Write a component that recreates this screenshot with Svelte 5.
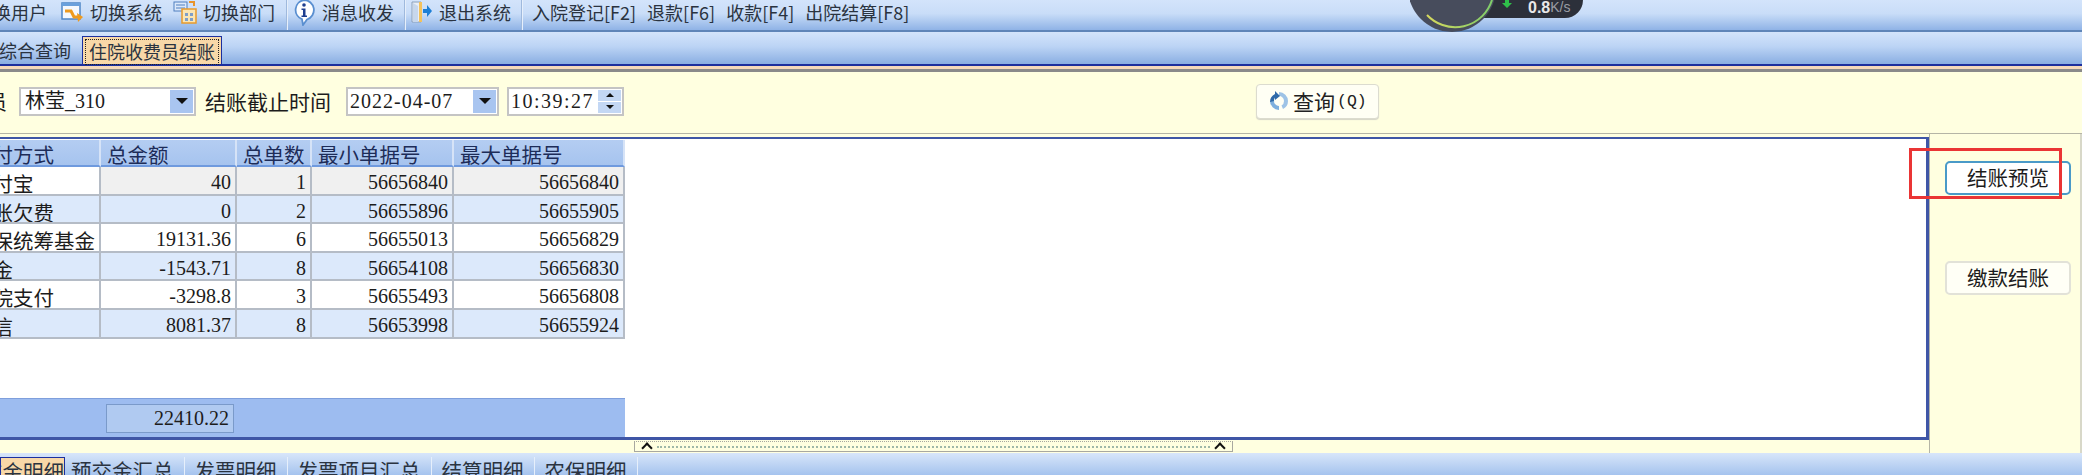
<script>
  // settlement summary by payment type
  const rows = [
    { name: '支付宝', total: '40', count: 1, min: '56656840', max: '56656840' },
    { name: '挂账欠费', total: '0', count: 2, min: '56655896', max: '56655905' },
    { name: '医保统筹基金', total: '19131.36', count: 6, min: '56655013', max: '56656829' },
    { name: '现金', total: '-1543.71', count: 8, min: '56654108', max: '56656830' },
    { name: '医院支付', total: '-3298.8', count: 3, min: '56655493', max: '56656808' },
    { name: '微信', total: '8081.37', count: 8, min: '56653998', max: '56655924' }
  ];
  const columns = ['支付方式', '总金额', '总单数', '最小单据号', '最大单据号'];
  const bottomTabs = ['预交金汇总', '发票明细', '发票项目汇总', '结算明细', '农保明细'];
</script>

<div class="app">
  <div class="toolbar">
    <span class="tool first">切换用户</span>
    <span class="tool">
      <svg class="ico" width="23" height="23" viewBox="0 0 23 23">
        <rect x="1" y="2" width="18" height="16" fill="#f4f8fe" stroke="#4f86c6" stroke-width="1.5" />
        <rect x="1" y="2" width="18" height="3" fill="#6aa0dc" />
        <path d="M4 10h6l3 6h5" fill="none" stroke="#ee9a1e" stroke-width="3" />
        <path d="M16 12l6 4-5 5z" fill="#ee9a1e" />
      </svg>
      切换系统
    </span>
    <span class="tool">
      <svg class="ico" width="24" height="24" viewBox="0 0 24 24">
        <rect x="1" y="2" width="13" height="9" fill="#dbe8fa" stroke="#4f7fbf" />
        <path d="M3 5h9M3 8h9" stroke="#4f7fbf" />
        <rect x="9" y="9" width="14" height="14" fill="#fbe6b4" stroke="#e89a2c" stroke-width="1.5" />
        <path d="M12 13h3v3h-3zM17 13h3v3h-3zM12 18h3v3h-3zM17 18h3v3h-3z" fill="#7f9fc8" />
        <path d="M16 1h6v5h-2V3h-4z" fill="#e8942c" />
      </svg>
      切换部门
    </span>
    <i class="sep"></i>
    <span class="tool wide">
      <svg class="ico" width="22" height="27" viewBox="0 0 22 27">
        <path d="M11 1a10 10 0 0 1 3 19.500L10 26l-1-5.800A10 10 0 0 1 11 1z" fill="#fff" stroke="#5a8fd0" stroke-width="1.800" />
        <circle cx="11" cy="6" r="1.800" fill="#1f3f8f" />
        <path d="M8.500 9.500h4v7h1.500v1.500H8.500v-1.500H10v-5.500H8.500z" fill="#1f3f8f" />
      </svg>
      消息收发
    </span>
    <i class="sep"></i>
    <span class="tool wide">
      <svg class="ico" width="21" height="24" viewBox="0 0 21 24">
        <path d="M1 2h9v20H1z" fill="#e9eef6" stroke="#8aa0bc" />
        <path d="M2 3l5 3v16H2z" fill="#c7d7ec" />
        <path d="M8 2h3v20H8z" fill="#f3c25e" />
        <path d="M12 9h4V5l5 6-5 6v-4h-4z" fill="#1d7fd6" />
      </svg>
      退出系统
    </span>
    <i class="sep wide-sep"></i>
    <span class="tool plain">入院登记[F2]</span>
    <span class="tool plain">退款[F6]</span>
    <span class="tool plain">收款[F4]</span>
    <span class="tool plain">出院结算[F8]</span>
  </div>

  <!-- network speed widget floating over the window -->
  <div class="speed">
    <div class="speed-pill">
      <svg width="12" height="8" viewBox="0 0 12 8"><path d="M4 0h4v3h3L6 8 1 3h3z" fill="#2fbf4a" /></svg>
      <span class="speed-val">0.8</span><span class="speed-unit">K/s</span>
    </div>
    <svg class="gauge" width="90" height="33" viewBox="0 0 90 33">
      <defs>
        <linearGradient id="arc" x1="0" y1="0" x2="1" y2="0">
          <stop offset="0" stop-color="#d6d85e" />
          <stop offset="1" stop-color="#7fce6a" />
        </linearGradient>
      </defs>
      <circle cx="42" cy="-12" r="44" fill="#474c5c" />
      <path d="M17 15 A 38.600 38.600 0 0 0 82 0" fill="none" stroke="url(#arc)" stroke-width="2" />
    </svg>
  </div>

  <div class="tabs">
    <span class="tab">综合查询</span>
    <span class="tab active"><span class="tab-focus">住院收费员结账</span></span>
  </div>
  <div class="stripe"></div>

  <div class="filters">
    <span class="cut-label">收费员</span>
    <div class="field combo">
      <span class="value cjk">林莹_310</span>
      <span class="drop"><i class="tri"></i></span>
    </div>
    <span class="label">结账截止时间</span>
    <div class="field date">
      <span class="value">2022-04-07</span>
      <span class="drop"><i class="tri"></i></span>
    </div>
    <div class="field time">
      <span class="value">10:39:27</span>
      <span class="spin">
        <span class="spin-btn"><i class="tri up"></i></span>
        <span class="spin-btn"><i class="tri"></i></span>
      </span>
    </div>
    <button class="query">
      <svg width="22" height="24" viewBox="0 0 22 24">
        <path d="M11 3a9 9 0 0 1 9 9 9 9 0 0 1-5 8l-1.500-3.500A5 5 0 0 0 16 12a5 5 0 0 0-5-5z" fill="#9ec3e6" />
        <path d="M11 21a9 9 0 0 1-9-9l4-.500a5 5 0 0 0 5 5.500z" fill="#7fb0de" />
        <path d="M2 13a9 9 0 0 1 5-8V2l5 5-5 4V8.500A5 5 0 0 0 6 12z" fill="#2f6aa8" />
      </svg>
      <span>查询</span><span class="hot">(Q)</span>
    </button>
  </div>

  <div class="body">
    <div class="left">
      <div class="frame">
        <div class="grid">
          <div class="g-row g-head">
            {#each columns as c}
              <span class="cell">{c}</span>
            {/each}
          </div>
          {#each rows as r, i}
            <div class="g-row" class:alt={i % 2 === 1} class:current={i === 0}>
              <span class="cell name">{r.name}</span>
              <span class="cell num">{r.total}</span>
              <span class="cell num">{r.count}</span>
              <span class="cell num">{r.min}</span>
              <span class="cell num">{r.max}</span>
            </div>
          {/each}
        </div>
        <div class="footer">
          <span class="sum">22410.22</span>
        </div>
      </div>
      <div class="split">
        <div class="handle">
          <i class="chev"></i>
          <i class="dots"></i>
          <i class="chev"></i>
        </div>
      </div>
    </div>
    <div class="side">
      <button class="act focus">结账预览</button>
      <button class="act">缴款结账</button>
    </div>
  </div>

  <div class="bottom-tabs">
    <span class="b-tab b-active">预交金明细</span>
    {#each bottomTabs as t}
      <span class="b-tab">{t}</span>
    {/each}
  </div>

  <!-- red annotation box drawn over the screenshot -->
  <div class="mark"></div>
</div>

<style>
  :global(body) {
    margin: 0;
    background: #fff;
  }

  .app {
    position: relative;
    display: flex;
    flex-direction: column;
    width: 2082px;
    height: 475px;
    overflow: hidden;
    font-family: "Noto Sans CJK SC", "Liberation Sans", sans-serif;
    color: #1c1c1c;
  }

  .toolbar {
    display: flex;
    flex: none;
    align-items: center;
    height: 30px;
    overflow: hidden;
    border-bottom: 2px solid #5f85b8;
    background: linear-gradient(#d3e4fb, #c9ddf8 45%, #8fb3e6);
    font-size: 18px;
    color: #2a3340;
    white-space: nowrap;
  }

  .tool {
    display: flex;
    flex: none;
    align-items: center;
    gap: 6px;
    margin-right: 11px;
    margin-bottom: 6px;
    line-height: 24px;
  }

  .tool.first {
    margin-left: -25px;
    margin-right: 14px;
  }

  .tool.wide {
    gap: 7px;
    margin-right: 10px;
  }

  .tool.plain {
    margin-right: 11px;
  }

  .ico {
    flex: none;
  }

  .sep {
    flex: none;
    width: 2px;
    height: 30px;
    margin-right: 5px;
    background: #e6effb;
    border-left: 1px solid #9fb9dd;
    box-sizing: border-box;
  }

  .sep.wide-sep {
    margin-right: 9px;
  }

  .speed {
    position: absolute;
    left: 1410px;
    top: 0;
    width: 173px;
    height: 33px;
  }

  .gauge {
    position: absolute;
    left: 0;
    top: 0;
  }

  .speed-pill {
    position: absolute;
    left: 40px;
    top: 0;
    display: flex;
    align-items: center;
    gap: 16px;
    box-sizing: border-box;
    width: 133px;
    height: 18px;
    padding-left: 52px;
    border-radius: 0 0 18px 0;
    background: #2c303a;
    font-family: "Liberation Sans", sans-serif;
    font-size: 16px;
    line-height: 13px;
  }

  .speed-pill svg {
    position: absolute;
    left: 51px;
    top: 0;
  }

  .speed-val {
    margin-left: 26px;
    margin-top: -4px;
    font-weight: 700;
    color: #e8e8e8;
  }

  .speed-unit {
    margin-left: -16px;
    margin-top: -4px;
    color: #9a9da5;
    font-size: 14px;
  }

  .tabs {
    display: flex;
    flex: none;
    align-items: flex-end;
    gap: 11px;
    height: 32px;
    border-bottom: 2px solid #1c2f9e;
    background: linear-gradient(#d3e4fb, #bcd4f5 45%, #8aaee2);
    font-size: 18px;
  }

  .tab {
    margin-left: -1px;
    line-height: 27px;
    color: #2a3340;
  }

  .tab.active {
    box-sizing: border-box;
    width: 140px;
    height: 28px;
    margin-left: 0;
    padding: 2px;
    border: 1px solid #1c2f9e;
    border-bottom: 0;
    background: #f8d8a8;
  }

  .tab-focus {
    display: block;
    height: 24px;
    padding-left: 3px;
    border: 1px dotted #222;
    line-height: 23px;
    white-space: nowrap;
  }

  .stripe {
    flex: none;
    height: 3px;
    border-bottom: 3px solid #8a8a8a;
    background: #f5d9bb;
  }

  .filters {
    display: flex;
    flex: none;
    align-items: center;
    box-sizing: border-box;
    height: 62px;
    padding-bottom: 3px;
    border-bottom: 1px solid #b5b5a6;
    background: #ffffe0;
    font-size: 20px;
  }

  .cut-label {
    flex: none;
    margin-left: -53px;
    margin-right: 10px;
    font-size: 20px;
    width: 62px;
    white-space: nowrap;
  }

  .field {
    display: flex;
    flex: none;
    align-items: center;
    box-sizing: border-box;
    height: 29px;
    padding: 1px;
    border: 2px solid #c4c4c4;
    background: #fff;
  }

  .value {
    flex: 1;
    padding-left: 1px;
    font-family: "Liberation Serif", serif;
    font-size: 20px;
    letter-spacing: 1px;
    line-height: 23px;
    white-space: nowrap;
  }

  .value.cjk {
    padding-left: 3px;
    font-family: "Liberation Serif", "Noto Sans CJK SC", serif;
    letter-spacing: 0;
  }

  .time .value {
    letter-spacing: 1.500px;
  }

  .combo {
    width: 177px;
  }

  .date {
    width: 153px;
    margin-left: 14px;
  }

  .time {
    width: 117px;
    margin-left: 8px;
  }

  .label {
    flex: none;
    width: 127px;
    margin-left: 9px;
    font-size: 21px;
    white-space: nowrap;
  }

  .drop {
    display: flex;
    flex: none;
    align-items: center;
    justify-content: center;
    width: 23px;
    height: 100%;
    background: #a9c5f0;
  }

  .tri {
    display: block;
    width: 0;
    height: 0;
    border-top: 6px solid #111;
    border-left: 6px solid transparent;
    border-right: 6px solid transparent;
  }

  .spin {
    display: flex;
    flex: none;
    flex-direction: column;
    gap: 1px;
    width: 23px;
    height: 100%;
  }

  .spin-btn {
    display: flex;
    flex: 1;
    align-items: center;
    justify-content: center;
    background: #c3d7f4;
  }

  .spin-btn .tri {
    border-top-width: 4px;
    border-left-width: 4px;
    border-right-width: 4px;
  }

  .spin-btn .tri.up {
    border-top: 0;
    border-bottom: 4px solid #111;
  }

  .query {
    display: flex;
    flex: none;
    align-items: center;
    box-sizing: border-box;
    width: 123px;
    height: 35px;
    margin-left: 632px;
    padding: 0 0 0 11px;
    border: 1px solid #dcdccf;
    border-radius: 4px;
    background: #fffff4;
    box-shadow: 0 1px 1px #d5d5c8;
    font-family: inherit;
    font-size: 21px;
    color: #222;
  }

  .query span {
    margin-left: 3px;
  }

  .query .hot {
    margin-left: 2px;
    font-family: "Liberation Mono", monospace;
    font-size: 16.500px;
  }

  .body {
    display: flex;
    flex: none;
    height: 319px;
    background: #ffffe0;
  }

  .left {
    display: flex;
    flex-direction: column;
    box-sizing: border-box;
    width: 1929px;
    padding-top: 3px;
  }

  .frame {
    display: flex;
    flex: none;
    flex-direction: column;
    justify-content: space-between;
    box-sizing: border-box;
    height: 303px;
    overflow: hidden;
    border-top: 2px solid #3f56a6;
    border-right: 3px solid #3f56a6;
    border-bottom: 3px solid #3f56a6;
    background: #fff;
  }

  .grid {
    width: 655px;
    margin-top: 1px;
    margin-left: -30px;
    font-size: 20.500px;
  }

  .g-row {
    display: grid;
    grid-template-columns: 131px 136px 75px 142px 171px;
    height: 28.600px;
    background: #fff;
  }

  .g-row.alt {
    background: #dce9fb;
  }

  .cell {
    box-sizing: border-box;
    padding: 0 4px 0 2px;
    overflow: hidden;
    border-right: 2px solid #b5bcc6;
    border-bottom: 2px solid #b5bcc6;
    line-height: 32px;
    white-space: nowrap;
  }

  .num {
    font-family: "Liberation Serif", serif;
    font-size: 20px;
    line-height: 31px;
    text-align: right;
  }

  .g-row.current .num {
    background: #f0f0f0;
  }

  .g-head {
    height: 27px;
    background: linear-gradient(#b4cdf2, #a5c3ee);
    color: #1d2c58;
  }

  .g-head .cell {
    padding-left: 6px;
    border-right-color: #d6e3f7;
    border-bottom: 2px solid #6f9ade;
    line-height: 29px;
  }

  .g-head .cell:first-child {
    padding-left: 2px;
  }

  .footer {
    box-sizing: border-box;
    width: 625px;
    height: 39px;
    padding: 5px 0 0 106px;
    border-top: 1px solid #7f9fdc;
    background: #9dbcf0;
  }

  .sum {
    display: block;
    box-sizing: border-box;
    width: 128px;
    height: 29px;
    padding-right: 4px;
    border: 1px solid #7a9aca;
    background: #b0caf1;
    font-family: "Liberation Serif", serif;
    font-size: 20px;
    line-height: 27px;
    text-align: right;
  }

  .split {
    display: flex;
    flex: 1;
    align-items: center;
    padding-left: 634px;
  }

  .handle {
    display: flex;
    align-items: center;
    gap: 4px;
    box-sizing: border-box;
    width: 599px;
    height: 11px;
    padding: 0 6px;
    border: 1px solid #a8a8a0;
    border-top-style: dotted;
  }

  .chev {
    flex: none;
    width: 6px;
    height: 6px;
    margin: 3px 2px 0;
    border-top: 2px solid #111;
    border-left: 2px solid #111;
    transform: rotate(45deg);
  }

  .dots {
    flex: 1;
    height: 0;
    border-top: 2px dotted #9fb8a8;
  }

  .side {
    display: flex;
    flex: 1;
    flex-direction: column;
    box-sizing: border-box;
    padding: 27px 0 0 15px;
    border-left: 1px solid #b5b5a6;
    border-right: 2px solid #d8d8c8;
    gap: 66px;
  }

  .act {
    box-sizing: border-box;
    width: 126px;
    height: 34px;
    padding: 0 0 3px;
    border: 2px solid #e2e2d8;
    border-radius: 5px;
    background: #fffff6;
    font-family: inherit;
    font-size: 20.500px;
    line-height: 26px;
    color: #1c1c1c;
  }

  .act.focus {
    border-color: #4a9ac8;
    background: #fff;
  }

  .bottom-tabs {
    display: flex;
    flex: none;
    align-items: flex-end;
    height: 22px;
    background: linear-gradient(#d8e6fa, #a5c3ee);
    font-size: 20.500px;
    color: #2a3340;
  }

  .b-tab {
    flex: none;
    box-sizing: border-box;
    height: 18px;
    padding: 0 10px;
    border-right: 1px solid #e6effb;
    line-height: 26px;
    white-space: nowrap;
  }

  .b-active {
    width: 65px;
    margin-right: -4px;
    padding: 0;
    border: 1px solid #1c2f9e;
    border-bottom: 0;
    background: #f8d8a8;
    direction: rtl;
    overflow: hidden;
  }

  .mark {
    position: absolute;
    left: 1909px;
    top: 148px;
    box-sizing: border-box;
    width: 153px;
    height: 51px;
    border: 3px solid #ea3535;
  }
</style>
